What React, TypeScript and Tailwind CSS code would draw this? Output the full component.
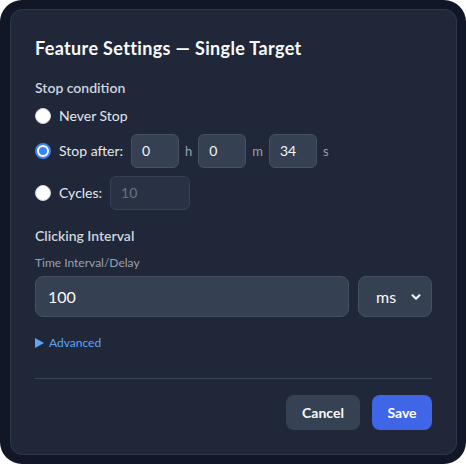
import { ChevronDown } from "lucide-react";

const Radio = ({ checked }: { checked?: boolean }) =>
  checked ? (
    <span className="w-4 h-4 rounded-full border-2 border-[#3b82f6] bg-white flex items-center justify-center shrink-0">
      <span className="w-2 h-2 rounded-full bg-[#3b82f6]" />
    </span>
  ) : (
    <span className="w-4 h-4 rounded-full bg-white border border-gray-300 shrink-0" />
  );

const TimeBox = ({ value }: { value: string }) => (
  <div className="w-12 h-[34px] rounded-md bg-[#354052] border border-[#455063] px-2.5 flex items-center text-sm text-gray-100">
    {value}
  </div>
);

export default function App() {
  return (
    <div className="w-[466px] h-[464px] bg-white font-[Lato,sans-serif]">
      <div className="w-full h-full rounded-[22px] bg-[#111727] pl-[10px] pr-[9px] py-[9px]">
        <div className="h-full rounded-xl border border-[#2f374a] bg-[#1f2739] p-6 flex flex-col">
          <h1 className="text-lg leading-7 font-bold tracking-[0.35px] text-gray-50">
            Feature Settings — Single Target
          </h1>

          <div className="mt-4 text-sm leading-5 font-semibold text-gray-300">Stop condition</div>

          <div className="mt-2 flex flex-col gap-2 text-sm text-gray-200">
            <div className="h-5 flex items-center gap-2">
              <Radio />
              <span>Never Stop</span>
            </div>
            <div className="h-[34px] flex items-center gap-2">
              <Radio checked />
              <span>Stop after:</span>
              <div className="flex items-center gap-1.5">
                <TimeBox value="0" />
                <span className="text-[13px] text-gray-400">h</span>
                <TimeBox value="0" />
                <span className="text-[13px] text-gray-400">m</span>
                <TimeBox value="34" />
                <span className="text-[13px] text-gray-400">s</span>
              </div>
            </div>
            <div className="h-[34px] flex items-center gap-2">
              <Radio />
              <span>Cycles:</span>
              <div className="w-20 h-[34px] rounded-md bg-[#293245] border border-[#364054] px-2.5 flex items-center text-sm text-gray-500">
                10
              </div>
            </div>
          </div>

          <div className="mt-4 text-sm leading-5 font-semibold text-gray-300">Clicking Interval</div>
          <div className="mt-[9px] text-xs leading-4 text-gray-400">Time Interval/Delay</div>

          <div className="mt-[5px] flex gap-[9px]">
            <div className="flex-1 h-[41px] rounded-lg bg-[#354052] border border-[#455063] px-3 flex items-center text-base text-gray-50">
              100
            </div>
            <div className="w-[74px] h-[41px] rounded-lg bg-[#354052] border border-[#455063] pl-[17px] pr-2 flex items-center justify-between text-base text-gray-50">
              <span>ms</span>
              <ChevronDown className="w-3.5 h-3.5" strokeWidth={3.5} />
            </div>
          </div>

          <div className="mt-[18px] h-4 flex items-center gap-[5px] text-xs text-[#60a5fa]">
            <svg width="9" height="10" viewBox="0 0 9 10" className="shrink-0">
              <polygon points="0,0 9,5 0,10" fill="currentColor" />
            </svg>
            <span>Advanced</span>
          </div>

          <div className="mt-[27px] h-px bg-[#3b4457]" />

          <div className="mt-4 flex justify-end gap-3">
            <button className="w-[74px] h-[35px] rounded-lg bg-[#374154] text-sm font-bold text-gray-50">
              Cancel
            </button>
            <button className="w-[60px] h-[35px] rounded-lg bg-[#4066e8] text-sm font-bold text-white">
              Save
            </button>
          </div>
        </div>
      </div>
    </div>
  );
}
